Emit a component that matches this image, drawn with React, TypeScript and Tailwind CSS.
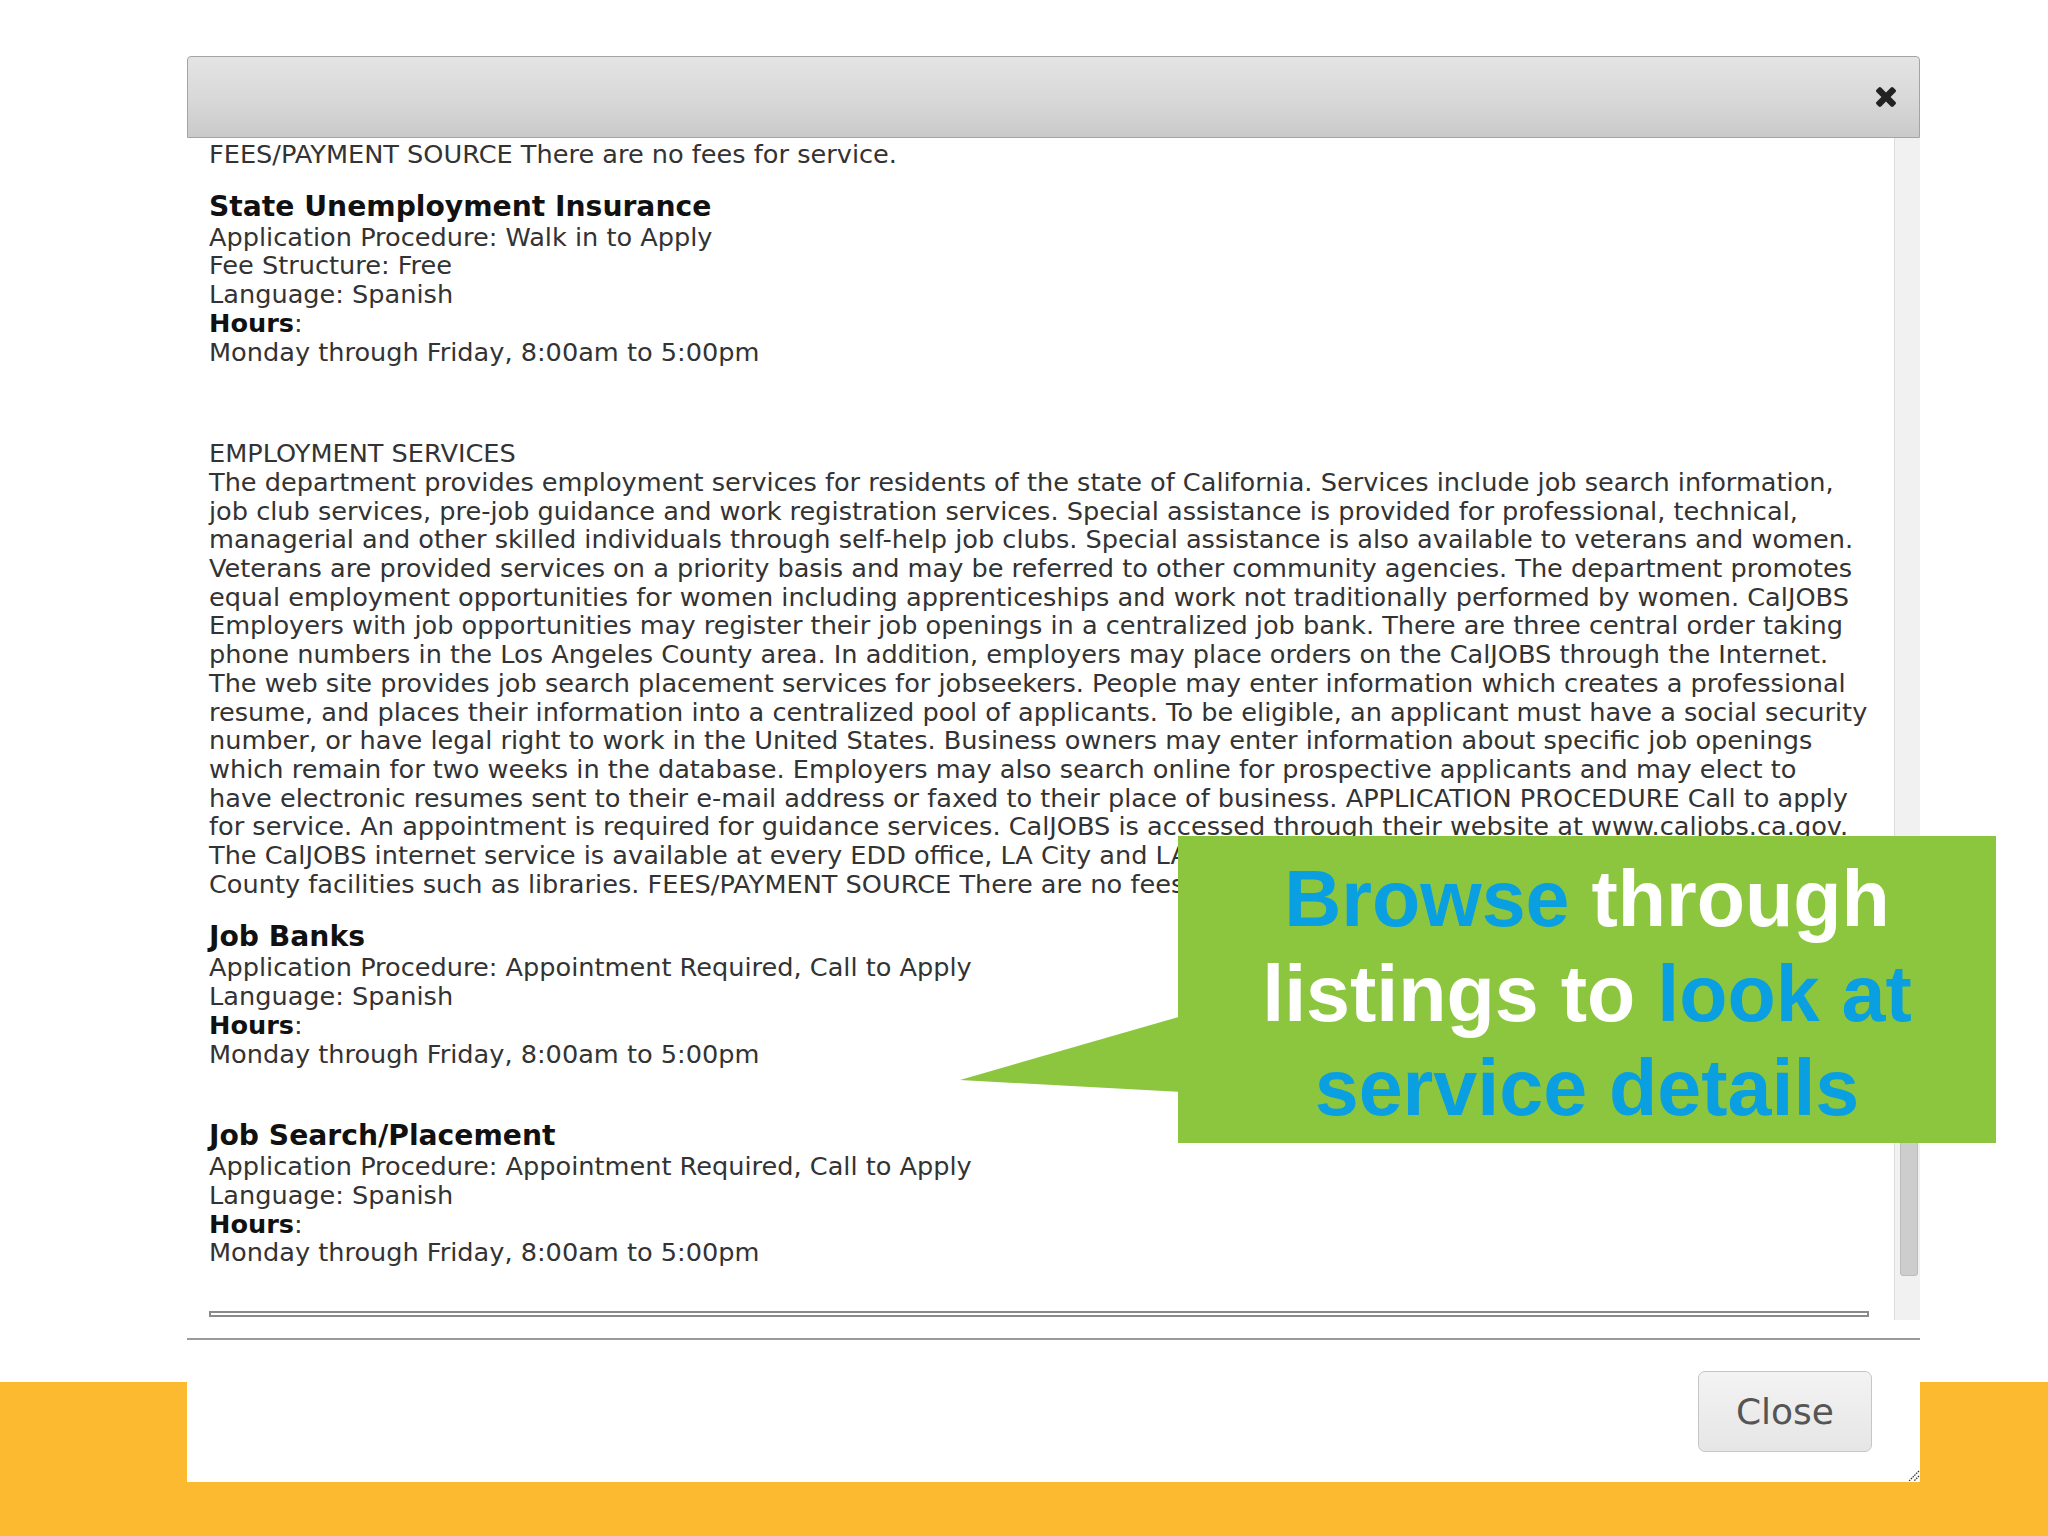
import React from "react";

const para = [
  "The department provides employment services for residents of the state of California. Services include job search information,",
  "job club services, pre-job guidance and work registration services. Special assistance is provided for professional, technical,",
  "managerial and other skilled individuals through self-help job clubs. Special assistance is also available to veterans and women.",
  "Veterans are provided services on a priority basis and may be referred to other community agencies. The department promotes",
  "equal employment opportunities for women including apprenticeships and work not traditionally performed by women. CalJOBS",
  "Employers with job opportunities may register their job openings in a centralized job bank. There are three central order taking",
  "phone numbers in the Los Angeles County area. In addition, employers may place orders on the CalJOBS through the Internet.",
  "The web site provides job search placement services for jobseekers. People may enter information which creates a professional",
  "resume, and places their information into a centralized pool of applicants. To be eligible, an applicant must have a social security",
  "number, or have legal right to work in the United States. Business owners may enter information about specific job openings",
  "which remain for two weeks in the database. Employers may also search online for prospective applicants and may elect to",
  "have electronic resumes sent to their e-mail address or faxed to their place of business. APPLICATION PROCEDURE Call to apply",
  "for service. An appointment is required for guidance services. CalJOBS is accessed through their website at www.caljobs.ca.gov.",
  "The CalJOBS internet service is available at every EDD office, LA City and LA County WorkSource Centers, and other",
  "County facilities such as libraries. FEES/PAYMENT SOURCE There are no fees for service.",
];

function Line({ children }: { children: React.ReactNode }) {
  return <div className="whitespace-nowrap">{children}</div>;
}

function Hours() {
  return (
    <>
      <Line>
        <span className="font-bold text-[#111]">Hours</span>:
      </Line>
      <Line>Monday through Friday, 8:00am to 5:00pm</Line>
    </>
  );
}

function Heading({ children, mt }: { children: React.ReactNode; mt: string }) {
  return (
    <div className={`whitespace-nowrap text-[28.2px] leading-[33px] font-bold text-[#111] ${mt}`}>
      {children}
    </div>
  );
}

export default function App() {
  return (
    <div className="relative w-[2048px] h-[1536px] overflow-hidden bg-white flex flex-col">
      <div className="mt-auto h-[154px] bg-[#fbba30]" />

      {/* Dialog */}
      <div className="absolute left-[187px] top-[56px] w-[1733px] h-[1426px] bg-white flex flex-col font-['DejaVu_Sans',sans-serif]">
        <div className="h-[82px] shrink-0 rounded-t-[4px] border border-[#a4a4a4] bg-gradient-to-b from-[#e4e4e4] via-[#d9d9d9] to-[#cacaca] flex items-center justify-end pr-[23px]">
          <svg width="20" height="20" viewBox="110 366 1188 1188">
            <path
              fill="#222"
              d="M1298 1322q0 40-28 68l-136 136q-28 28-68 28t-68-28l-294-294-294 294q-28 28-68 28t-68-28l-136-136q-28-28-28-68t28-68l294-294-294-294q-28-28-28-68t28-68l136-136q28-28 68-28t68 28l294 294 294-294q28-28 68-28t68 28l136 136q28 28 28 68t-28 68l-294 294 294 294q28 28 28 68z"
            />
          </svg>
        </div>

        <div className="h-[1182px] shrink-0 flex flex-row">
          <div className="flex-1 overflow-hidden pt-[2px] pl-[22px] pr-[25px] text-[25.6px] leading-[28.7px] text-[#333]">
            <Line>FEES/PAYMENT SOURCE There are no fees for service.</Line>

            <Heading mt="mt-[21px]">State Unemployment Insurance</Heading>
            <Line>Application Procedure: Walk in to Apply</Line>
            <Line>Fee Structure: Free</Line>
            <Line>Language: Spanish</Line>
            <Hours />

            <div className="mt-[73px]">
              <Line>EMPLOYMENT SERVICES</Line>
              {para.map((l, i) => (
                <Line key={i}>{l}</Line>
              ))}
            </div>

            <Heading mt="mt-[22px]">Job Banks</Heading>
            <Line>Application Procedure: Appointment Required, Call to Apply</Line>
            <Line>Language: Spanish</Line>
            <Hours />

            <Heading mt="mt-[51px]">Job Search/Placement</Heading>
            <Line>Application Procedure: Appointment Required, Call to Apply</Line>
            <Line>Language: Spanish</Line>
            <Hours />

            <div className="mt-[44px] h-[6px] border-2 border-[#8a8a8a] bg-white" />
          </div>

          <div className="w-[26px] shrink-0 bg-[#f1f1f1] border-l border-[#dcdcdc] flex flex-col pt-[812px] pl-[5px] pr-[2px]">
            <div className="h-[326px] rounded-[3px] bg-[#cdcdcd] border border-[#bcbcbc]" />
          </div>
        </div>

        <div className="h-[18px] shrink-0" />

        <div className="flex-1 border-t-2 border-[#9a9a9a] flex justify-end items-start pt-[31px] pr-[48px]">
          <button className="w-[174px] h-[81px] rounded-[7px] border border-[#c6c6c6] bg-gradient-to-b from-[#f3f3f3] to-[#e6e6e6] text-[36px] text-[#555] font-['DejaVu_Sans',sans-serif] flex items-center justify-center">
            Close
          </button>
        </div>

        <svg className="absolute right-0 bottom-0" width="14" height="14" viewBox="0 0 14 14">
          <path d="M13 3 L3 13 M13 8 L8 13" stroke="#333" strokeWidth="1.3" strokeDasharray="1.5 1" />
        </svg>
      </div>

      {/* Callout */}
      <svg className="absolute left-[958px] top-[1014px]" width="224" height="80" viewBox="0 0 224 80">
        <polygon points="2,66 224,2 224,78" fill="#8cc63f" />
      </svg>
      <div className="absolute left-[1178px] top-[836px] w-[818px] h-[307px] bg-[#8cc63f] flex flex-col items-center pt-[16px] font-['Liberation_Sans',Arial,sans-serif] font-bold text-[79px] leading-[94.5px] text-white">
        <div className="whitespace-nowrap">
          <span className="text-[#0a9fe0]">Browse</span> through
        </div>
        <div className="whitespace-nowrap">
          listings to <span className="text-[#0a9fe0]">look at</span>
        </div>
        <div className="whitespace-nowrap text-[#0a9fe0]">service details</div>
      </div>
    </div>
  );
}
